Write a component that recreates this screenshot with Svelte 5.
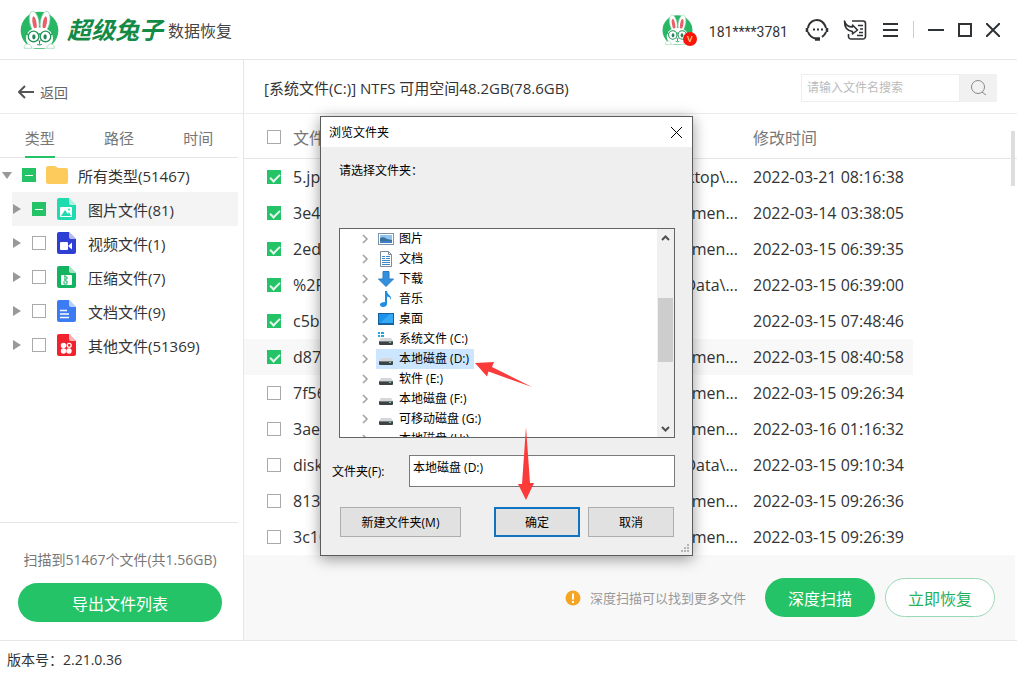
<script>
  let search = $state('');
  let folder = $state('本地磁盘 (D:)');
  let activeTab = $state('类型');
  let selectedDisk = $state('本地磁盘 (D:)');

  const tabs = ['类型', '路径', '时间'];

  const types = [
    { label: '图片文件(81)', icon: 'image', color: '#1fdcb0', partial: true },
    { label: '视频文件(1)', icon: 'video', color: '#2f3fd3', partial: false },
    { label: '压缩文件(7)', icon: 'zip', color: '#12b361', partial: false },
    { label: '文档文件(9)', icon: 'doc', color: '#3b7cf5', partial: false },
    { label: '其他文件(51369)', icon: 'other', color: '#f0232d', partial: false }
  ];

  let files = $state([
    { name: '5.jpg', path: 'Desktop\\...', time: '2022-03-21 08:16:38', checked: true },
    { name: '3e4', path: 'Documen...', time: '2022-03-14 03:38:05', checked: true },
    { name: '2ed', path: 'Documen...', time: '2022-03-15 06:39:35', checked: true },
    { name: '%2F', path: 'AppData\\...', time: '2022-03-15 06:39:00', checked: true },
    { name: 'c5b', path: '', time: '2022-03-15 07:48:46', checked: true },
    { name: 'd87', path: 'Documen...', time: '2022-03-15 08:40:58', checked: true, active: true },
    { name: '7f56', path: 'Documen...', time: '2022-03-15 09:26:34', checked: false },
    { name: '3aed', path: 'Documen...', time: '2022-03-16 01:16:32', checked: false },
    { name: 'disk', path: 'AppData\\...', time: '2022-03-15 09:10:34', checked: false },
    { name: '813', path: 'Documen...', time: '2022-03-15 09:26:36', checked: false },
    { name: '3c10', path: 'Documen...', time: '2022-03-15 09:26:39', checked: false }
  ]);

  const folders = [
    { label: '图片', icon: 'picture' },
    { label: '文档', icon: 'document' },
    { label: '下载', icon: 'download' },
    { label: '音乐', icon: 'music' },
    { label: '桌面', icon: 'desktop' },
    { label: '系统文件 (C:)', icon: 'system' },
    { label: '本地磁盘 (D:)', icon: 'disk' },
    { label: '软件 (E:)', icon: 'disk' },
    { label: '本地磁盘 (F:)', icon: 'disk' },
    { label: '可移动磁盘 (G:)', icon: 'disk' },
    { label: '本地磁盘 (H:)', icon: 'disk' }
  ];

  function pick(item) {
    selectedDisk = item.label;
    folder = item.label;
  }
</script>

{#snippet rabbit(size)}
  <svg width={size} height={size} viewBox="58 31 118 118" aria-hidden="true">
    <circle cx="117" cy="93" r="57" fill="#27b765" />
    <g fill="#fff" stroke="#8fd3ab" stroke-width="2">
      <ellipse cx="101" cy="66" rx="14" ry="32" transform="rotate(-10 101 66)" />
      <ellipse cx="134" cy="66" rx="14" ry="32" transform="rotate(10 134 66)" />
    </g>
    <ellipse cx="102" cy="70" rx="6" ry="20" fill="#e8606a" transform="rotate(-10 102 70)" />
    <ellipse cx="133" cy="70" rx="6" ry="20" fill="#e8606a" transform="rotate(10 133 70)" />
    <path d="M76 118C76 96 94 84 117 84s41 12 41 34c0 10-6 18-14 24l-4 5H94l-4-5c-8-6-14-14-14-24Z" fill="#fff" />
    <path d="M71 147c-2-8 4-13 11-13s11 6 12 13ZM139 147c1-7 5-13 12-13s13 5 11 13Z" fill="#fff" stroke="#8fd3ab" stroke-width="2" />
    <g fill="none" stroke="#23955a" stroke-width="4">
      <circle cx="99" cy="111" r="16" />
      <circle cx="135" cy="111" r="16" />
      <path d="M113 105q4-3 8 0M83 106l-6-4M151 106l6-4" />
      <path d="M117 125v10M110 135q7 4 14 0" stroke-width="3" />
    </g>
    <ellipse cx="100" cy="112" rx="5" ry="8" fill="#23855a" />
    <ellipse cx="134" cy="112" rx="5" ry="8" fill="#23855a" />
    <path d="M112 123h10l-5 5Z" fill="#23855a" />
  </svg>
{/snippet}

{#snippet typeIcon(kind, color)}
  <svg class="type-icon" width="19" height="22" viewBox="0 0 19 22" aria-hidden="true">
    <path d="M2 0h10l7 7v13a2 2 0 0 1-2 2H2a2 2 0 0 1-2-2V2a2 2 0 0 1 2-2Z" fill={color} />
    <path d="M12 0l7 7h-5a2 2 0 0 1-2-2Z" fill="#fff" opacity=".65" />
    {#if kind === 'image'}
      <rect x="3" y="9" width="12" height="10" rx="1" fill="#fff" />
      <path d="M4 18l4-6 3 4 1-2 2 4Z" fill={color} />
      <circle cx="12" cy="11.500" r="1" fill={color} />
    {:else if kind === 'video'}
      <rect x="3" y="10" width="8" height="8" rx="1" fill="#fff" />
      <path d="M11.500 13.500l3.500-3v7l-3.500-3Z" fill="#fff" />
    {:else if kind === 'zip'}
      <rect x="4" y="9" width="11" height="10" rx="1" fill="#fff" />
      <path d="M8 9v2h2v2H8v2h2v3H7v-3M7 11h1M7 13h1" fill="none" stroke={color} />
    {:else if kind === 'doc'}
      <path d="M3 10.500h7M3 14h9M3 17.500h9" stroke="#fff" stroke-width="1.500" />
    {:else}
      <g fill="#fff">
        <circle cx="6.500" cy="11.500" r="2.700" />
        <circle cx="6.500" cy="17" r="2.700" />
        <circle cx="12" cy="17" r="2.700" />
      </g>
      <circle cx="12.200" cy="11.300" r="2" fill="none" stroke="#fff" stroke-width="1.300" />
    {/if}
  </svg>
{/snippet}

{#snippet folderIcon(kind)}
  <svg width="16" height="16" viewBox="0 0 16 16" aria-hidden="true">
    {#if kind === 'picture'}
      <rect x=".5" y="2.500" width="15" height="11" fill="#fff" stroke="#7f93a8" />
      <rect x="2" y="4" width="12" height="8" fill="#8fc4f0" />
      <path d="M2 7q4-2 7 1l5 1v3H2Z" fill="#3b7196" />
      <path d="M2 10h12v2H2Z" fill="#3c80c9" />
    {:else if kind === 'document'}
      <path d="M2.500 .5h8l3 3v12h-11Z" fill="#fff" stroke="#7b8b99" />
      <path d="M10.500 .5v3h3" fill="none" stroke="#7b8b99" />
      <path d="M4 5.500h3M8 5.500h4M4 7.500h3M8 7.500h4M4 9.500h8M4 11.500h8M4 13.500h8" stroke="#3f88c8" />
    {:else if kind === 'download'}
      <path d="M5 .5h6V8h4.500L8 15.500.5 8H5Z" fill="#3390dd" stroke="#2a7cc4" />
    {:else if kind === 'music'}
      <path d="M7 0h2c0 4 5 4 4 9-1-3-2-3-4-3.500V13c0 2-2 3-4 3s-3-1-3-2.500S4 11 7 11Z" fill="#1c8fe3" />
    {:else if kind === 'desktop'}
      <rect x=".5" y="2.500" width="15" height="11" fill="#1a93ec" stroke="#16619c" />
      <path d="M1 13L12 3h3v10Z" fill="#36a9f6" />
      <path d="M1 12.500h14" stroke="#1366a8" />
    {:else}
      {#if kind === 'system'}
        <path d="M0 1h2v2H0ZM3 1h3v2H3ZM0 4h2v2H0ZM3 4h3v2H3Z" fill="#1ba7e0" />
      {/if}
      <path d="M3 7h10l2 3H1Z" fill="#d5d7d8" />
      <rect x="1" y="10" width="14" height="4" rx="1" fill="#3d4247" />
      <path d="M2 10.500h12" stroke="#777c80" />
      <rect x="11" y="11" width="2" height="1" fill="#56e08b" />
    {/if}
  </svg>
{/snippet}

<div class="app">
  <header class="topbar">
    <div class="brand">
      {@render rabbit(39)}
      <span class="brand-name">超级兔子</span>
      <span class="brand-product">数据恢复</span>
    </div>

    <div class="account">
      <div class="avatar">
        {@render rabbit(31)}
        <span class="badge">V</span>
      </div>
      <span class="phone">181****3781</span>
    </div>

    <div class="tools">
      <button aria-label="客服">
        <svg width="24" height="24" viewBox="0 0 24 24" fill="none" stroke="#2f3336" stroke-width="2">
          <path d="M3 10A9 9 0 0 1 15 2.500Q19 4 21 10M3 14q2 5 7 6.500M21 14q-1 3-4 5" />
          <path d="M2 10v4M22 10v4" stroke-width="2.500" />
          <path d="M10 21h5" stroke-width="3.500" />
          <path d="M8 11.500h2M12 11.500h2M16 11.500h2" stroke-width="2" />
        </svg>
      </button>
      <button class="import" aria-label="导入">
        <svg width="24" height="24" viewBox="0 0 24 24" fill="none" stroke="#2f3336" stroke-width="1.600">
          <path d="M9 3h11a2.500 2.500 0 0 1 2.500 2.500v13A2.500 2.500 0 0 1 20 21H8a2.500 2.500 0 0 1-2.500-2.500V16" />
          <path d="M1.500 3c1 4 4 6 8 6V7l5 5-5 4v-2.500C4 13 1.500 9 1.500 3Z" stroke-linejoin="round" />
          <path d="M15 7.500h5M17 11h3M16 14.500h4M14 17.500h6" />
        </svg>
      </button>
      <button aria-label="菜单">
        <svg width="16" height="16" viewBox="0 0 16 16" stroke="#2f3336" stroke-width="2">
          <path d="M0 2h15M0 8h15M0 14h15" />
        </svg>
      </button>
      <span class="split"></span>
      <button aria-label="最小化">
        <svg width="16" height="16" viewBox="0 0 16 16" stroke="#2f3336" stroke-width="2"><path d="M0 8h16" /></svg>
      </button>
      <button aria-label="最大化">
        <svg width="14" height="14" viewBox="0 0 14 14" fill="none" stroke="#2f3336" stroke-width="2"><rect x="1" y="1" width="12" height="12" /></svg>
      </button>
      <button aria-label="关闭">
        <svg width="14" height="14" viewBox="0 0 14 14" stroke="#2f3336" stroke-width="2"><path d="M0 0l14 14M14 0L0 14" /></svg>
      </button>
    </div>
  </header>

  <div class="body">
    <aside class="sidebar">
      <button class="back">
        <svg width="16" height="14" viewBox="0 0 16 14" fill="none" stroke="#555" stroke-width="2">
          <path d="M7 1L1 7l6 6M1 7h15" />
        </svg>
        返回
      </button>

      <nav class="tabs">
        {#each tabs as tab}
          <button class:active={tab === activeTab} onclick={() => (activeTab = tab)}>{tab}</button>
        {/each}
      </nav>

      <div class="tree">
        <div class="tree-root">
          <span class="caret-down"></span>
          <input type="checkbox" id="type-all" indeterminate={true} />
          <svg width="22" height="18" viewBox="0 0 22 18" aria-hidden="true">
            <path d="M2 0h7l3 2h8a2 2 0 0 1 2 2v12a2 2 0 0 1-2 2H2a2 2 0 0 1-2-2V2a2 2 0 0 1 2-2Z" fill="#fdcb5c" />
          </svg>
          <label for="type-all">所有类型(51467)</label>
        </div>
        {#each types as type, i}
          <div class="tree-item" class:current={i === 0}>
            <span class="caret-right"></span>
            <input type="checkbox" id="type-{i}" indeterminate={type.partial} />
            {@render typeIcon(type.icon, type.color)}
            <label for="type-{i}">{type.label}</label>
          </div>
        {/each}
      </div>

      <div class="summary">
        <p>扫描到51467个文件(共1.56GB)</p>
        <button class="pill">导出文件列表</button>
      </div>
    </aside>

    <main class="content">
      <div class="title-row">
        <h1>[系统文件(C:)] NTFS 可用空间48.2GB(78.6GB)</h1>
        <form class="search">
          <input type="text" aria-label="搜索" placeholder="请输入文件名搜索" bind:value={search} />
          <button type="button" aria-label="搜索">
            <svg width="16" height="16" viewBox="0 0 16 16" fill="none" stroke="#888">
              <circle cx="7" cy="7" r="6.500" />
              <path d="M11 12l4 3" />
            </svg>
          </button>
        </form>
      </div>

      <div class="list">
        <table>
          <colgroup>
            <col class="col-check" />
            <col class="col-name" />
            <col class="col-path" />
            <col class="col-time" />
            <col />
          </colgroup>
          <thead>
            <tr>
              <th><input type="checkbox" aria-label="全选" /></th>
              <th>文件</th>
              <th></th>
              <th>修改时间</th>
              <th></th>
            </tr>
          </thead>
          <tbody>
            {#each files as file}
              <tr class:active={file.active}>
                <td><input type="checkbox" aria-label={file.name} bind:checked={file.checked} /></td>
                <td>{file.name}</td>
                <td class="path">{file.path}</td>
                <td>{file.time}</td>
                <td></td>
              </tr>
            {/each}
          </tbody>
        </table>
        <div class="list-thumb"></div>
      </div>

      <div class="actions">
        <svg width="16" height="16" viewBox="0 0 16 16" aria-hidden="true">
          <circle cx="8" cy="8" r="7.500" fill="#f5a524" />
          <path d="M8 3.500v6M8 11v2" stroke="#fff" stroke-width="2" />
        </svg>
        <span class="hint">深度扫描可以找到更多文件</span>
        <button class="pill">深度扫描</button>
        <button class="pill outline">立即恢复</button>
      </div>
    </main>
  </div>

  <footer>版本号：2.21.0.36</footer>

  <div class="dialog" role="dialog" aria-labelledby="dialog-title">
    <div class="dialog-title">
      <span id="dialog-title">浏览文件夹</span>
      <button aria-label="关闭">
        <svg width="11" height="11" viewBox="0 0 11 11" stroke="#000"><path d="M0 0l11 11M11 0L0 11" /></svg>
      </button>
    </div>
    <div class="dialog-body">
      <p>请选择文件夹：</p>
      <div class="folder-box">
        <ul>
          {#each folders as item}
            <li>
              <svg width="7" height="10" viewBox="0 0 7 10" fill="none" stroke="#a0a0a0" stroke-width="1.500"><path d="M1 1l4 4-4 4" /></svg>
              <button class:selected={item.label === selectedDisk} onclick={() => pick(item)}>
                {@render folderIcon(item.icon)}
                <span>{item.label}</span>
              </button>
            </li>
          {/each}
        </ul>
        <div class="scrollbar">
          <svg width="9" height="6" viewBox="0 0 9 6" fill="none" stroke="#505050" stroke-width="2"><path d="M1 5l3.500-3.500L8 5" /></svg>
          <div class="thumb"></div>
          <svg width="9" height="6" viewBox="0 0 9 6" fill="none" stroke="#505050" stroke-width="2"><path d="M1 1l3.500 3.500L8 1" /></svg>
        </div>
      </div>
      <div class="field">
        <label for="folder">文件夹(F):</label>
        <input id="folder" type="text" bind:value={folder} />
      </div>
      <div class="buttons">
        <button class="new-folder">新建文件夹(M)</button>
        <button class="ok">确定</button>
        <button>取消</button>
      </div>
    </div>
    <svg class="grip" width="9" height="9" viewBox="0 0 9 9" fill="#b4b4b4" aria-hidden="true">
      <path d="M6 0h2v2H6ZM3 3h2v2H3ZM6 3h2v2H6ZM0 6h2v2H0ZM3 6h2v2H3ZM6 6h2v2H6Z" />
    </svg>
    <!-- step pointers: pick the disk, then confirm -->
    <svg class="pointers" width="220" height="150" viewBox="470 355 220 150" fill="#fb3a3a" aria-hidden="true">
      <path d="M475 363l19-1-2 5 40 20-43.500-15.500-1.500 5Z" />
      <path d="M526 427l4 56h4l-8 17-8-16h4Z" />
    </svg>
  </div>
</div>

<style>
  :global(body) {
    background: #fff;
  }

  .app {
    position: relative;
    font-family: 'Open Sans', 'Noto Sans CJK SC', sans-serif;
    font-size: 15px;
    color: #333;
  }

  .app * {
    box-sizing: border-box;
  }

  button {
    padding: 0;
    border: 0;
    background: none;
    font: inherit;
    color: inherit;
    cursor: pointer;
  }

  svg {
    display: block;
    flex-shrink: 0;
  }

  /* header */
  .topbar {
    display: flex;
    align-items: center;
    height: 60px;
    padding: 0 17px 0 20px;
    border-bottom: 1px solid #e6e6e6;
  }

  .brand {
    display: flex;
    align-items: center;
    margin-right: auto;
  }

  .brand-name {
    margin: 0 5px 0 8px;
    font-size: 24px;
    font-weight: 700;
    font-style: italic;
    line-height: 32px;
    color: #148a47;
  }

  .brand-product {
    font-size: 16px;
    color: #444;
  }

  .account {
    display: flex;
    align-items: center;
    gap: 16px;
    margin-right: 17px;
  }

  .avatar {
    position: relative;
  }

  .badge {
    position: absolute;
    right: -4px;
    bottom: -1px;
    width: 14px;
    height: 14px;
    border-radius: 50%;
    background: #f8150c;
    color: #ffd98a;
    font-size: 9px;
    font-weight: 600;
    line-height: 14px;
    text-align: center;
  }

  .phone {
    padding-top: 4px;
    font-family: Roboto, sans-serif;
    font-size: 14px;
  }

  .tools {
    display: flex;
    align-items: center;
    gap: 14px;
  }

  .tools .import {
    margin-right: 2px;
  }

  .split {
    width: 1px;
    height: 17px;
    background: #ccc;
  }

  .body {
    display: flex;
    border-bottom: 1px solid #e6e6e6;
  }

  /* sidebar */
  .sidebar {
    display: flex;
    flex-direction: column;
    flex: 0 0 244px;
    border-right: 1px solid #e6e6e6;
  }

  .back {
    display: flex;
    align-items: center;
    gap: 6px;
    height: 54px;
    padding: 10px 18px 0;
    border-bottom: 1px solid #ececec;
    font-size: 14px;
    color: #666;
  }

  .tabs {
    display: flex;
    height: 44px;
    margin-right: 5px;
    border-bottom: 1px solid #e6e6e6;
  }

  .tabs button {
    position: relative;
    flex: 1;
    padding-top: 4px;
    color: #777;
  }

  .tabs .active::after {
    content: '';
    position: absolute;
    bottom: -1px;
    left: calc(50% - 15px);
    width: 30px;
    height: 2px;
    background: #25c368;
  }

  .tree-root,
  .tree-item {
    display: flex;
    align-items: center;
    gap: 10px;
    height: 34px;
    margin-right: 5px;
  }

  .tree-root {
    padding-left: 2px;
  }

  .tree-item {
    margin-left: 12px;
    padding-left: 1px;
  }

  .tree-item.current {
    background: #f4f4f4;
  }

  .tree-item label {
    margin-left: 2px;
  }

  .caret-down {
    border: 5px solid transparent;
    border-top: 7px solid #999;
    border-bottom: 0;
  }

  .caret-right {
    border: 5px solid transparent;
    border-left: 8px solid #999;
    border-right: 0;
    margin-right: 1px;
  }

  .type-icon {
    margin-left: 1px;
  }

  input[type='checkbox'] {
    appearance: none;
    display: block;
    position: relative;
    flex: 0 0 14px;
    width: 14px;
    height: 14px;
    margin: 0;
    border: 1px solid #aaa;
    background: #fff;
  }

  input[type='checkbox']:checked,
  input[type='checkbox']:indeterminate {
    border-color: #25c368;
    background: #25c368;
  }

  input[type='checkbox']:checked::after {
    content: '';
    position: absolute;
    left: 2px;
    top: 3px;
    width: 8px;
    height: 4px;
    border: solid #e4f8ec;
    border-width: 0 0 2px 2px;
    transform: rotate(-45deg);
  }

  input[type='checkbox']:indeterminate::after {
    content: '';
    position: absolute;
    left: 2px;
    top: 6px;
    width: 8px;
    height: 1px;
    background: #fff;
  }

  .summary {
    margin-top: auto;
    margin-right: 5px;
    padding: 26px 16px 18px 18px;
    border-top: 1px solid #e6e6e6;
    text-align: center;
    color: #777;
  }

  .summary p {
    margin: 0 0 12px;
    font-size: 14px;
    line-height: 22px;
  }

  .summary .pill {
    width: 100%;
  }

  .pill {
    height: 39px;
    border-radius: 20px;
    background: #25c368;
    font-size: 16px;
    color: #fff;
  }

  .pill.outline {
    border: 1px solid #9bd9b6;
    background: #fff;
    color: #22b15e;
  }

  /* file list */
  .content {
    flex: 1;
    min-width: 0;
  }

  .title-row {
    display: flex;
    align-items: center;
    justify-content: space-between;
    height: 54px;
    padding: 2px 20px 0;
    border-bottom: 1px solid #ececec;
  }

  h1 {
    margin: 0;
    font-size: 15px;
    font-weight: 400;
  }

  .search {
    display: flex;
    width: 196px;
    height: 28px;
  }

  .search input {
    flex: 1;
    min-width: 0;
    padding: 0 5px;
    border: 1px solid #eee;
    font: inherit;
    font-size: 12px;
  }

  .search input::placeholder {
    color: #bbb;
  }

  .search button {
    display: flex;
    align-items: center;
    justify-content: center;
    width: 37px;
    background: #f1f1f1;
  }

  .list {
    position: relative;
  }

  .list-thumb {
    position: absolute;
    top: 17px;
    right: 2px;
    width: 4px;
    height: 55px;
    background: #ddd;
  }

  table {
    width: 100%;
    table-layout: fixed;
    border-collapse: separate;
    border-spacing: 0;
    font-size: 16px;
  }

  .col-check {
    width: 49px;
  }

  .col-name {
    width: 240px;
  }

  .col-path {
    width: 220px;
  }

  .col-time {
    width: 160px;
  }

  th {
    height: 45px;
    padding: 2px 0 0;
    border-bottom: 1px solid #e6e6e6;
    font-weight: 400;
    text-align: left;
    color: #777;
  }

  td {
    height: 36px;
    padding: 0;
    line-height: 24px;
    white-space: nowrap;
  }

  th:first-child,
  td:first-child {
    padding-left: 23px;
  }

  .path {
    padding-right: 15px;
    text-align: right;
  }

  tr.active td:not(:last-child) {
    background: #f8f8f8;
  }

  .actions {
    display: flex;
    align-items: center;
    justify-content: flex-end;
    height: 85px;
    margin-right: 2px;
    padding-right: 20px;
    background: #f8f8f8;
  }

  .hint {
    margin: 0 19px 0 9px;
    font-size: 13px;
    color: #999;
  }

  .actions .pill {
    width: 110px;
  }

  .actions .outline {
    margin-left: 10px;
  }

  footer {
    padding: 8px 7px;
    font-size: 14px;
    line-height: 22px;
  }

  /* folder dialog */
  .dialog {
    position: absolute;
    top: 116px;
    left: 320px;
    width: 373px;
    border: 1px solid #5c5c5c;
    background: #efefef;
    box-shadow: 0 3px 14px rgba(0, 0, 0, 0.4);
    font-size: 12px;
    color: #000;
  }

  .dialog-title {
    display: flex;
    align-items: center;
    justify-content: space-between;
    height: 30px;
    padding: 0 10px 0 8px;
    background: #fff;
  }

  .dialog-body {
    padding: 15px 17px 18px 11px;
  }

  .dialog p {
    margin: 0 0 48px 7px;
    line-height: 18px;
  }

  .folder-box {
    display: flex;
    height: 210px;
    margin-left: 7px;
    border: 1px solid #646464;
    background: #fff;
    overflow: hidden;
  }

  .folder-box ul {
    flex: 1;
    margin: 0;
    padding: 0 0 0 22px;
    list-style: none;
  }

  .folder-box li {
    display: flex;
    align-items: center;
    gap: 7px;
    height: 20px;
  }

  .folder-box li button {
    display: flex;
    align-items: center;
    gap: 5px;
    height: 20px;
    padding: 0 5px 0 2px;
    line-height: 20px;
  }

  .folder-box .selected {
    background: #cce6ff;
  }

  .scrollbar {
    display: flex;
    flex-direction: column;
    align-items: center;
    width: 17px;
    padding: 6px 0 5px;
    background: #f0f0f0;
  }

  .thumb {
    width: 15px;
    height: 64px;
    margin: 57px 0 auto;
    background: #cdcdcd;
  }

  .field {
    display: flex;
    align-items: center;
    justify-content: space-between;
    margin-top: 17px;
  }

  .field input {
    width: 266px;
    height: 32px;
    padding: 0 3px 8px;
    border: 1px solid #7a7a7a;
    background: #fff;
    font: inherit;
  }

  .buttons {
    display: flex;
    gap: 8px;
    margin: 20px 1px 0 8px;
  }

  .buttons button {
    width: 86px;
    height: 30px;
    border: 1px solid #adadad;
    background: #e1e1e1;
  }

  .buttons .new-folder {
    width: 121px;
    margin-right: auto;
  }

  .buttons .ok {
    border: 2px solid #0f73c2;
  }

  .grip {
    position: absolute;
    right: 2px;
    bottom: 2px;
  }

  .pointers {
    position: absolute;
    top: 238px;
    left: 149px;
    pointer-events: none;
  }
</style>
